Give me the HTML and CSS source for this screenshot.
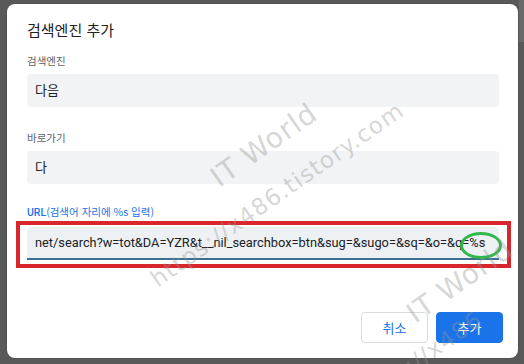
FILE: index.html
```html
<!DOCTYPE html>
<html lang="ko">
<head>
<meta charset="utf-8">
<title>검색엔진 추가</title>
<link rel="stylesheet" href="styles.css">
</head>
<body>
<div class="page">
  <div class="dialog">
    <h1 class="title">검색엔진 추가</h1>
    <div class="field">
      <label class="label">검색엔진</label>
      <div class="input">다음</div>
    </div>
    <div class="field field-2">
      <label class="label">바로가기</label>
      <div class="input">다</div>
    </div>
    <div class="field field-3">
      <label class="label label-blue"><b>URL</b>(검색어 자리에 %s 입력)</label>
      <div class="highlight">
        <div class="input input-focused">net/search?w=tot&amp;DA=YZR&amp;t__nil_searchbox=btn&amp;sug=&amp;sugo=&amp;sq=&amp;o=&amp;q=%s<span class="circle"></span></div>
      </div>
    </div>
    <div class="actions">
      <button class="btn">취소</button>
      <button class="btn btn-primary">추가</button>
    </div>
  </div>
  <div class="side-strip"></div>
  <span class="wm wm-a">IT World</span>
  <span class="wm wm-b">https://x486.tistory.com</span>
  <span class="wm wm-c">IT World</span>
  <span class="wm wm-d">https://x486</span>
</div>
</body>
</html>
```

FILE: styles.css
```css
* { box-sizing: border-box; }
html, body {
  margin: 0;
  padding: 0;
  width: 524px;
  height: 364px;
  overflow: hidden;
  background: #595959;
  font-family: Roboto, "Noto Sans CJK KR", sans-serif;
}
.page {
  position: relative;
  width: 524px;
  height: 364px;
  overflow: hidden;
  padding: 4px 0 0 7px;
}
.dialog {
  width: 511px;
  height: 354px;
  background: #fff;
  border-radius: 8px;
  padding: 16px 19px 16px 20px;
  display: flex;
  flex-direction: column;
  box-shadow: 0 0 0 1px rgba(0,0,0,0.08);
}
.title {
  margin: 0;
  font-size: 15px;
  line-height: 20px;
  font-weight: 400;
  color: #202124;
  font-family: "Noto Sans CJK KR", sans-serif;
}
.field { display: flex; flex-direction: column; margin-top: 14px; }
.field-2 { margin-top: 24px; }
.field-3 { margin-top: 21px; }
.label {
  font-size: 10.5px;
  line-height: 14px;
  color: #5f6368;
  font-family: "Noto Sans CJK KR", sans-serif;
}
.label-blue { color: #1a73e8; }
.label-blue b { font-family: Roboto, sans-serif; font-weight: 500; }
.input {
  margin-top: 6px;
  height: 33px;
  background: #f1f3f4;
  border-radius: 4px;
  padding: 0 8px;
  font-size: 13px;
  line-height: 33px;
  color: #202124;
  white-space: nowrap;
  position: relative;
}
.highlight {
  margin: 1px -12px 0 -11px;
  border: 4px solid #d9262d;
  padding: 2px 8px 4px 7px;
}
.input-focused {
  margin-top: 0;
  border-radius: 4px 4px 0 0;
  border-bottom: 2px solid #3b6e8f;
  line-height: 31px;
  background: #eef1f4;
  font-size: 12.8px;
}
.circle {
  position: absolute;
  left: 433px;
  top: 5px;
  width: 42px;
  height: 27px;
  border: 3.5px solid #2fb84a;
  border-radius: 50%;
}
.actions {
  margin-top: 44px;
  display: flex;
  justify-content: flex-end;
  gap: 8px;
  margin-right: -4px;
}
.btn {
  width: 67px;
  height: 31px;
  border-radius: 4px;
  border: 1px solid #dadce0;
  background: #fff;
  color: #1a73e8;
  font-size: 13px;
  font-family: "Noto Sans CJK KR", sans-serif;
  padding: 0;
}
.btn-primary {
  background: #1a73e8;
  border-color: #1a73e8;
  color: #fff;
}
.side-strip {
  position: absolute;
  right: 0;
  top: 0;
  width: 5px;
  height: 42px;
  background: #6a6a6a;
}
.wm {
  position: absolute;
  font-family: "DejaVu Sans", sans-serif;
  color: rgba(150,150,150,0.4);
  white-space: nowrap;
  transform-origin: 0 100%;
  transform: rotate(-35deg);
  pointer-events: none;
}
.wm-a { left: 222px; top: 164px; font-size: 28px; line-height: 28px; letter-spacing: 1px; }
.wm-b { left: 160px; top: 268px; font-size: 23px; line-height: 23px; letter-spacing: 1.2px; }
.wm-c { left: 418px; top: 300px; font-size: 28px; line-height: 28px; letter-spacing: 1px; }
.wm-d { left: 360px; top: 392px; font-size: 23px; line-height: 23px; letter-spacing: 1.2px; }
```
